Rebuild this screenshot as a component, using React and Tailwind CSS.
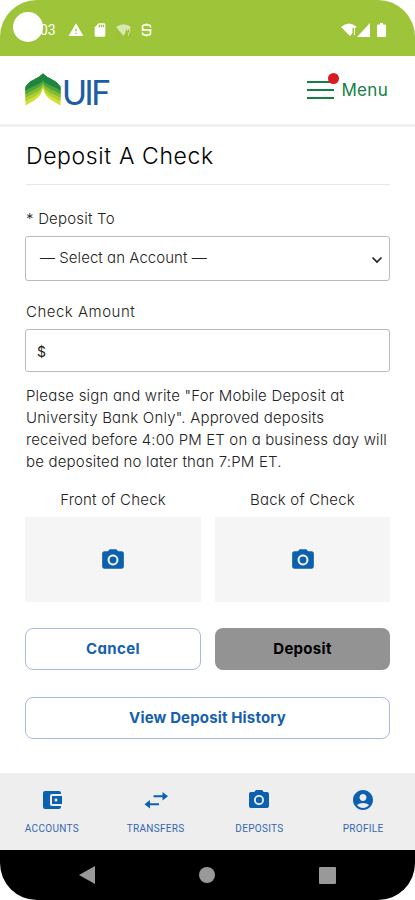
import { MdPhotoCamera, MdAccountBalanceWallet, MdAccountCircle, MdWarning, MdSdCard } from "react-icons/md";

function StatusBar() {
  return (
    <div className="flex h-14 shrink-0 items-center bg-[#9ec43a] pt-1 pl-[13px] pr-[25px] text-white">
      <span className="z-10 -mt-1.5 size-[30px] shrink-0 rounded-full bg-white" />
      <span className="-ml-[3px] w-[17px] text-[14px] font-normal font-['Roboto',sans-serif]">03</span>
      <MdWarning className="ml-[11px] size-4" />
      <MdSdCard className="ml-[8px] size-4" />
      <svg className="ml-[8px] h-[13px] w-[15px] opacity-60" viewBox="0 0 15 13">
        <path d="M0 3Q7.500-2.500 15 3L13 5.500H10L9 9.500L7.500 12Z" fill="currentColor" />
        <path d="M11 7Q13-0.500 14 7.500L12.500 9.500V11.500" fill="none" stroke="currentColor" />
      </svg>
      <svg className="ml-[10px] h-[14px] w-[11px]" viewBox="0 0 11 14" fill="none" stroke="currentColor" strokeWidth="1.600">
        <path d="M9.500 4.500V4Q9.500 2 7.500 2H3.500Q1.500 2 1.500 4V5Q1.500 7 3.500 7H7.500Q9.500 7 9.500 9V10Q9.500 12 7.500 12H3.500Q1.500 12 1.500 10V9.500M5.500 0.500V2M5.500 12V13.500M0.500 7H10.500" />
      </svg>
      <svg className="ml-auto h-[14px] w-4" viewBox="0 0 16 14">
        <path d="M0 4Q8-3 16 4L14 5H11.500V10L9 13Z" fill="currentColor" />
        <path d="M13.500 5V12" stroke="currentColor" />
      </svg>
      <svg className="h-[14px] w-[13px]" viewBox="0 0 13 14">
        <path d="M13 0V14H0Z" fill="currentColor" />
      </svg>
      <svg className="ml-[7px] mr-[4px] h-[14px] w-[9px]" viewBox="0 0 9 14">
        <path d="M3 0H6V1.500H8Q9 1.500 9 2.500V13Q9 14 8 14H1Q0 14 0 13V2.500Q0 1.500 1 1.500H3Z" fill="currentColor" />
      </svg>
    </div>
  );
}

function Logo() {
  return (
    <div className="flex items-start">
      <svg viewBox="0 0 36 34" className="h-[34px] w-9">
        <path d="M18 0.500C13 6 4 7 0.500 14V32.500C7 28 16 26 18 15C20 26 29 28 35.500 32.500V14C32 7 23 6 18 0.500Z" fill="#d3df35" />
        <path d="M18 0.500C13 6 4 7 0.500 14V28.500C7 24 16 23 18 13C20 23 29 24 35.500 28.500V14C32 7 23 6 18 0.500Z" fill="#aecf33" />
        <path d="M18 0.500C13 6 4 7 0.500 14V25C7 20 16 19.500 18 12C20 19.500 29 20 35.500 25V14C32 7 23 6 18 0.500Z" fill="#80bb36" />
        <path d="M18 0.500C13 6 4 7 0.500 14V21.500C7 16 16 15.500 18 10C20 15.500 29 16 35.500 21.500V14C32 7 23 6 18 0.500Z" fill="#4fa33a" />
        <path d="M18 0.500C13 6 4 7 0.500 14V18C7 12 16 12 18 7C20 12 29 12 35.500 18V14C32 7 23 6 18 0.500Z" fill="#1b8541" />
      </svg>
      <span className="mt-px ml-px text-[34px] font-normal leading-[36px] tracking-[-2.800px] text-[#1c5ea5] font-['Lato',sans-serif]">
        UIF
      </span>
    </div>
  );
}

function TransferIcon() {
  return (
    <svg viewBox="0 0 24 24" className="size-6" fill="currentColor">
      <path d="M9.500 7.300H18.500V4L24 8.300L18.500 12.600V9.300H9.500ZM15 15.300H6V12L0.500 16.300L6 20.600V17.300H15Z" />
    </svg>
  );
}

function NavItem({ icon, label }) {
  return (
    <div className="flex flex-1 flex-col items-center text-[#0b60b0]">
      {icon}
      <span className="mt-[11px] text-[10px] font-normal leading-3 tracking-[0.300px] text-[#3567b0] font-['Roboto',sans-serif]">{label}</span>
    </div>
  );
}

function CheckSide({ label }) {
  return (
    <div className="flex flex-col items-center">
      <span className="leading-[22px] tracking-[0.200px]">{label}</span>
      <div className="mt-[6px] flex h-[85px] w-full items-center justify-center bg-[#f5f5f5] text-[#0b60b0]">
        <MdPhotoCamera className="size-[26px]" />
      </div>
    </div>
  );
}

const button = "flex h-[42px] items-center justify-center rounded-lg text-[15px] font-bold";

export default function App() {
  return (
    <div className="flex h-[900px] w-[415px] flex-col overflow-hidden rounded-[37px] bg-white text-[15px] font-light text-[#222] font-['Inter',sans-serif] [font-feature-settings:'cv11']">
      <StatusBar />
      <header className="flex h-[71px] shrink-0 items-start justify-between border-b-[3px] border-[#f1f1f1] pt-[17px] pr-[27px] pl-[25px]">
        <Logo />
        <div className="flex items-center text-[#148044]">
          <div className="relative mt-1 mr-[7px] flex h-[18px] flex-col justify-between">
            <span className="h-[2px] w-[27px] bg-current" />
            <span className="h-[2px] w-[27px] bg-current" />
            <span className="h-[2px] w-[27px] bg-current" />
            <span className="absolute -top-[8px] -right-[5px] size-[11px] rounded-full bg-[#d91a20]" />
          </div>
          <span className="mt-[5px] text-[17px] font-normal leading-6 tracking-[0.300px]">Menu</span>
        </div>
      </header>
      <main className="flex grow flex-col px-[25px]">
        <h1 className="mt-[13px] ml-px h-[45px] border-b border-[#e6e6e6] text-[23px] leading-8 tracking-[0.620px] text-black">
          Deposit A Check
        </h1>
        <label className="mt-[23px] ml-px leading-[22px] tracking-[0.200px]">* Deposit To</label>
        <div className="mt-[6px] flex h-[45px] items-center justify-between rounded-[3px] border border-[#bbb] pr-[6px] pl-[14px]">
          <span className="tracking-[0.050px]">— Select an Account —</span>
          <svg viewBox="0 0 12 8" className="mt-[2px] h-2 w-3" fill="none" stroke="#222" strokeWidth="1.700">
            <path d="M1.500 1.500L6 6L10.500 1.500" />
          </svg>
        </div>
        <label className="mt-5 ml-px leading-[22px] tracking-[0.500px]">Check Amount</label>
        <div className="mt-[6px] flex h-[43px] items-center rounded-[3px] border border-[#bbb] pt-0.5 pl-[11px] text-[14px] font-normal">$</div>
        <p className="mt-[13px] ml-px leading-[22px] tracking-[0.190px] whitespace-nowrap">
          Please sign and write "For Mobile Deposit at
          <br />
          University Bank Only". Approved deposits
          <br />
          <span className="tracking-[0.120px]">received before 4:00 PM ET on a business day will</span>
          <br />
          be deposited no later than 7:PM ET.
        </p>
        <div className="mt-4 grid grid-cols-[176px_175px] gap-[14px]">
          <CheckSide label="Front of Check" />
          <CheckSide label="Back of Check" />
        </div>
        <div className="mt-[26px] grid grid-cols-[176px_175px] gap-[14px]">
          <div className={`${button} border border-[#a9b9dd] tracking-[0.350px] text-[#1560b0]`}>Cancel</div>
          <div className={`${button} bg-[#939393] tracking-[0.300px] text-black`}>Deposit</div>
        </div>
        <div className={`${button} mt-[27px] border border-[#a9b9dd] tracking-[0.150px] text-[#1560b0]`}>View Deposit History</div>
      </main>
      <nav className="flex h-[77px] shrink-0 bg-[#eee] pt-[15px]">
        <NavItem icon={<MdAccountBalanceWallet className="size-6" />} label="ACCOUNTS" />
        <NavItem icon={<TransferIcon />} label="TRANSFERS" />
        <NavItem icon={<MdPhotoCamera className="size-6" />} label="DEPOSITS" />
        <NavItem icon={<MdAccountCircle className="size-6" />} label="PROFILE" />
      </nav>
      <div className="flex h-[50px] shrink-0 items-center justify-between bg-black px-[79px] text-[#999]">
        <svg viewBox="0 0 16 18" className="h-[18px] w-4" fill="currentColor">
          <path d="M16 0V18L0 9Z" />
        </svg>
        <span className="size-4 rounded-full bg-current" />
        <span className="size-[17px] rounded-[1px] bg-current" />
      </div>
    </div>
  );
}
